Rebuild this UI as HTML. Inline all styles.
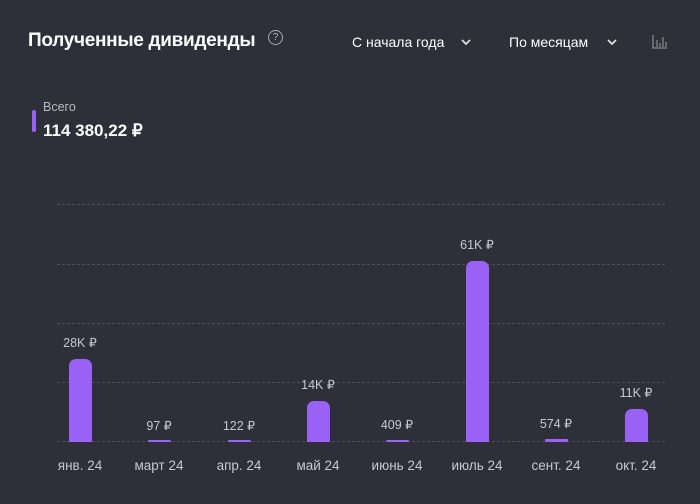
<!DOCTYPE html><html><head><style>
body{margin:0;width:700px;height:504px;background:#2f2f3a;font-family:"Liberation Sans",sans-serif;position:relative;overflow:hidden;color:#fff}
.a{position:absolute;white-space:nowrap}
.g{position:absolute;left:57px;width:608px;border-top:1px dashed #4e4e5a}
.b{position:absolute;width:23px;background:#9a62f6;border-radius:7px 7px 0 0}
.v{position:absolute;width:80px;text-align:center;font-size:12.5px;color:#c8c8d0}
.m{position:absolute;width:80px;text-align:center;font-size:13.5px;color:#c8c8d0;top:458px}
</style></head><body>
<div class="a" style="left:28px;top:30px;font-size:19px;font-weight:bold;letter-spacing:-0.3px">Полученные дивиденды</div>
<div class="a" style="left:268px;top:30px;width:13px;height:13px;border:1px solid #aaa;border-radius:50%;font-size:10px;text-align:center;line-height:13px;color:#bbb">?</div>
<div class="a" style="left:352px;top:34px;font-size:14px">С начала года</div>
<svg class="a" style="left:461px;top:38px" width="10" height="8"><path d="M1 2l4 4 4-4" stroke="#ddd" stroke-width="1.8" fill="none"/></svg>
<div class="a" style="left:509px;top:34px;font-size:14px">По месяцам</div>
<svg class="a" style="left:607px;top:38px" width="10" height="8"><path d="M1 2l4 4 4-4" stroke="#ddd" stroke-width="1.8" fill="none"/></svg>
<svg class="a" style="left:652px;top:34px" width="16" height="16"><path d="M1 1v13h14M5 6v7M8 9v4M11 3v10M14 8v5" stroke="#888" stroke-width="1.3" fill="none"/></svg>
<div class="a" style="left:32px;top:110px;width:4px;height:22px;background:#9a62f6;border-radius:2px"></div>
<div class="a" style="left:43px;top:100px;font-size:12.5px;color:#bbb">Всего</div>
<div class="a" style="left:43px;top:121px;font-size:17px;font-weight:bold">114 380,22 ₽</div>
<div class="g" style="top:204px"></div><div class="g" style="top:264px"></div><div class="g" style="top:323px"></div><div class="g" style="top:382px"></div><div class="g" style="top:441px"></div>
<div class="b" style="left:69px;top:359px;height:83px"></div>
<div class="b" style="left:148px;top:440px;height:2px;border-radius:1px"></div>
<div class="b" style="left:228px;top:440px;height:2px;border-radius:1px"></div>
<div class="b" style="left:307px;top:401px;height:41px"></div>
<div class="b" style="left:386px;top:440px;height:2px;border-radius:1px"></div>
<div class="b" style="left:466px;top:261px;height:181px"></div>
<div class="b" style="left:545px;top:439px;height:3px;border-radius:1px"></div>
<div class="b" style="left:625px;top:409px;height:33px"></div>
<div class="v" style="left:40px;top:335px">28K ₽</div>
<div class="v" style="left:119px;top:418px">97 ₽</div>
<div class="v" style="left:199px;top:418px">122 ₽</div>
<div class="v" style="left:278px;top:377px">14K ₽</div>
<div class="v" style="left:357px;top:417px">409 ₽</div>
<div class="v" style="left:437px;top:237px">61K ₽</div>
<div class="v" style="left:516px;top:416px">574 ₽</div>
<div class="v" style="left:596px;top:385px">11K ₽</div>
<div class="m" style="left:40px">янв. 24</div>
<div class="m" style="left:119px">март 24</div>
<div class="m" style="left:199px">апр. 24</div>
<div class="m" style="left:278px">май 24</div>
<div class="m" style="left:357px">июнь 24</div>
<div class="m" style="left:437px">июль 24</div>
<div class="m" style="left:516px">сент. 24</div>
<div class="m" style="left:596px">окт. 24</div>
</body></html>
